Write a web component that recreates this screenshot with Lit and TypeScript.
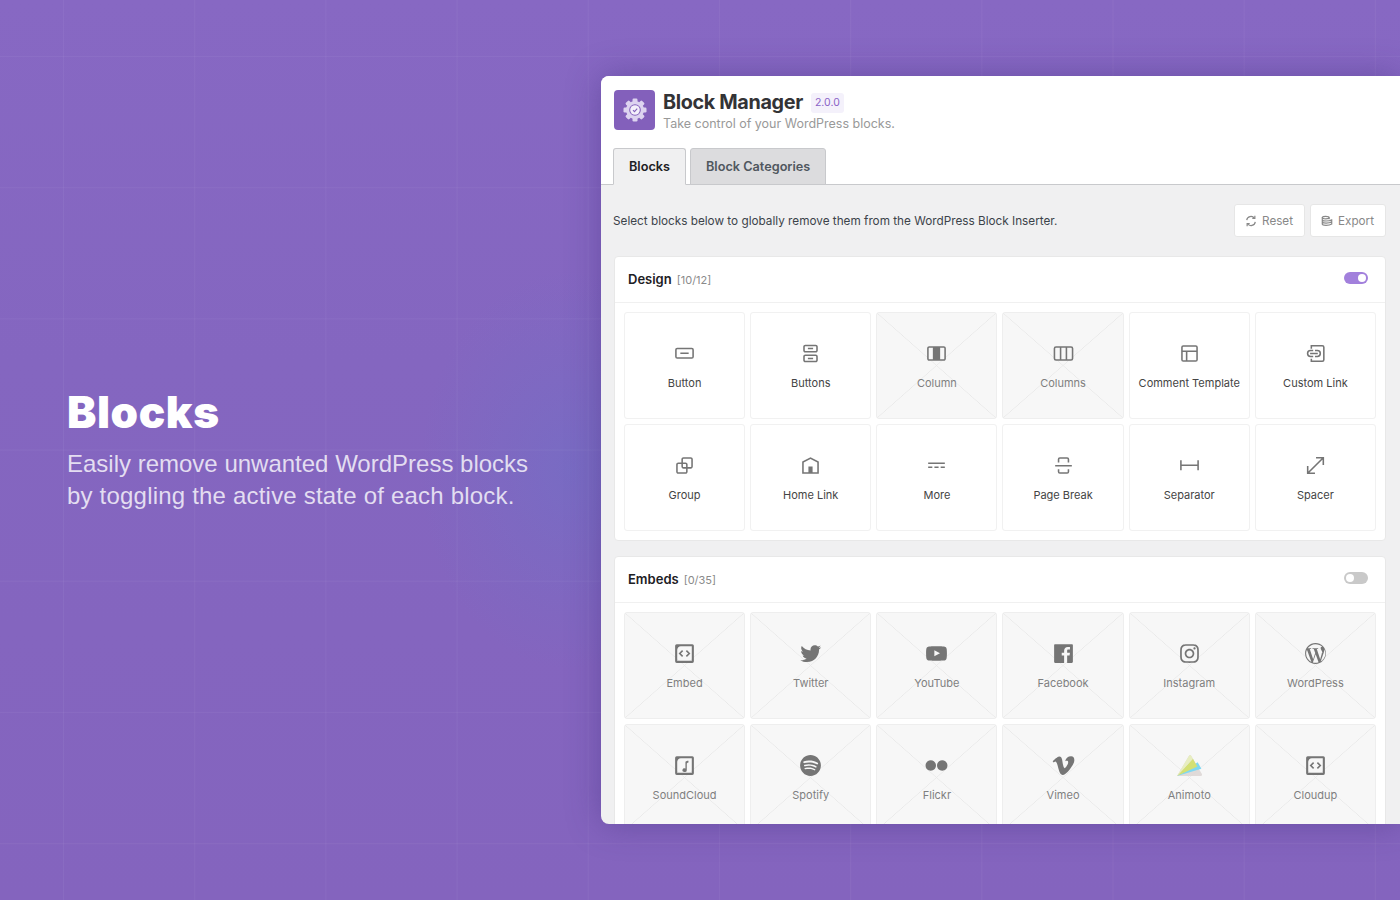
import { LitElement, html, css, svg } from "lit";
import { customElement } from "lit/decorators.js";

const p = (d: string) => svg`<path d=${d}></path>`;
const s = (d: string) => svg`<path class="st" d=${d}></path>`;
const frame = "M4.5 3h15A1.5 1.5 0 0 1 21 4.5v15a1.5 1.5 0 0 1-1.5 1.5h-15A1.5 1.5 0 0 1 3 19.5v-15A1.5 1.5 0 0 1 4.5 3zM8.5 5C6.5 5.2 5.2 6.5 5 8.5V19h14V5z";
const frameIcon = svg`<path fill-rule="evenodd" d=${frame}></path>`;
const codeMarks = s("M10.2 9.2 7.4 12l2.8 2.8M13.8 9.2l2.8 2.8-2.8 2.8");

const I: Record<string, unknown> = {
  button: p("M8 12.5h8V11H8v1.5Z M19 6.5H5a2 2 0 0 0-2 2V15a2 2 0 0 0 2 2h14a2 2 0 0 0 2-2V8.5a2 2 0 0 0-2-2ZM5 8h14a.5.5 0 0 1 .5.5V15a.5.5 0 0 1-.5.5H5a.5.5 0 0 1-.5-.5V8.5A.5.5 0 0 1 5 8Z"),
  buttons: p("M14.5 17.5H9.5V16H14.5V17.5Z M14.5 8H9.5V6.5H14.5V8Z M7 3.5H17C18.1046 3.5 19 4.39543 19 5.5V9C19 10.1046 18.1046 11 17 11H7C5.89543 11 5 10.1046 5 9V5.5C5 4.39543 5.89543 3.5 7 3.5ZM17 5H7C6.72386 5 6.5 5.22386 6.5 5.5V9C6.5 9.27614 6.72386 9.5 7 9.5H17C17.2761 9.5 17.5 9.27614 17.5 9V5.5C17.5 5.22386 17.2761 5 17 5Z M7 13H17C18.1046 13 19 13.8954 19 15V18.5C19 19.6046 18.1046 20.5 17 20.5H7C5.89543 20.5 5 19.6046 5 18.5V15C5 13.8954 5.89543 13 7 13ZM17 14.5H7C6.72386 14.5 6.5 14.7239 6.5 15V18.5C6.5 18.7761 6.72386 19 7 19H17C17.2761 19 17.5 18.7761 17.5 18.5V15C17.5 14.7239 17.2761 14.5 17 14.5Z"),
  column: p("M19 5H5c-1.1 0-2 .9-2 2v10c0 1.1.9 2 2 2h14c1.1 0 2-.9 2-2V7c0-1.1-.9-2-2-2zM5 17.5c-.3 0-.5-.2-.5-.5V7c0-.3.2-.5.5-.5h3.5v11H5zm14.5-.5c0 .3-.2.5-.5.5h-3.5v-11H19c.3 0 .5.2.5.5v10z"),
  columns: s("M4.8 5.8h14.4a1.5 1.5 0 0 1 1.5 1.5v9.4a1.5 1.5 0 0 1-1.5 1.5H4.800a1.5 1.5 0 0 1-1.500-1.500V7.300a1.500 1.500 0 0 1 1.500-1.500zM9.200 5.800v12.400M14.800 5.800v12.400"),
  layout: p("M18 5.500H6a.5.5 0 00-.5.5v3h13V6a.5.5 0 00-.5-.5zm.5 5H10v8h8a.5.5 0 00.5-.5v-7.500zm-10 0h-3V18a.5.5 0 00.5.500h2.500v-8zM6 4h12a2 2 0 012 2v12a2 2 0 01-2 2H6a2 2 0 01-2-2V6a2 2 0 012-2z"),
  custom: s("M8 7.500V4.500h10.500A1.500 1.500 0 0 1 20 6v12a1.500 1.500 0 0 1-1.500 1.500H8v-2.500M9.800 9.200H7.200a2.800 2.800 0 0 0 0 5.600h2.600M11.500 9.200h2.300a2.800 2.800 0 0 1 0 5.600h-2.300M6.800 12h7.400"),
  group: p("M18 4h-7c-1.100 0-2 .9-2 2v3H6c-1.100 0-2 .9-2 2v7c0 1.100.9 2 2 2h7c1.100 0 2-.9 2-2v-3h3c1.100 0 2-.9 2-2V6c0-1.100-.9-2-2-2zm-4.500 14c0 .3-.2.5-.5.5H6c-.3 0-.5-.2-.5-.5v-7c0-.3.2-.5.5-.5h3V13c0 1.100.9 2 2 2h2.500v3zm0-4.500H11c-.3 0-.5-.2-.5-.5v-2.500H13c.3 0 .5.2.5.5v2.500zm5-.5c0 .3-.2.5-.5.5h-3V11c0-1.100-.9-2-2-2h-2.500V6c0-.3.2-.5.5-.5h7c.3 0 .5.2.5.5v7z"),
  home: p("M12 4 4 8.200V20h16V8.200L12 4zm6.500 14.500H14V13h-4v5.500H5.500V9.100L12 5.700l6.500 3.400v9.400z"),
  more: p("M4 9v1.500h16V9H4zm12 5.500h4V13h-4v1.500zm-6 0h4V13h-4v1.500zm-6 0h4V13H4v1.500z"),
  pagebreak: p("M17.500 9V6a2 2 0 0 0-2-2h-7a2 2 0 0 0-2 2v3H8V6a.5.5 0 0 1 .5-.5h7a.5.5 0 0 1 .5.5v3h1.500Zm0 6.500V18a2 2 0 0 1-2 2h-7a2 2 0 0 1-2-2v-2.500H8V18a.5.5 0 0 0 .5.5h7a.5.5 0 0 0 .5-.5v-2.500h1.500ZM4 13h16v-1.500H4V13Z"),
  separator: p("M4.500 12.500v4H3V7h1.500v3.987h15V7H21v9.500h-1.500v-4h-15Z"),
  spacer: s("M4.500 19.500 19.500 4.500M12.500 4.500h7v7M11.500 19.500h-7v-7"),
  embed: svg`${frameIcon}${codeMarks}`,
  twitter: p("M22.230 5.924c-.736.326-1.527.547-2.357.646.847-.508 1.498-1.312 1.804-2.270-.793.470-1.670.812-2.606.996C18.325 4.498 17.258 4 16.078 4c-2.266 0-4.103 1.837-4.103 4.103 0 .322.036.635.106.935-3.410-.170-6.433-1.804-8.457-4.287-.353.607-.556 1.312-.556 2.064 0 1.424.724 2.680 1.825 3.415-.673-.022-1.305-.207-1.860-.514v.052c0 1.988 1.415 3.647 3.293 4.023-.344.095-.707.145-1.080.145-.265 0-.522-.026-.773-.074.522 1.630 2.038 2.817 3.833 2.850-1.404 1.100-3.174 1.757-5.096 1.757-.332 0-.660-.020-.980-.057 1.816 1.164 3.973 1.843 6.290 1.843 7.547 0 11.675-6.252 11.675-11.675 0-.178-.004-.355-.012-.530.802-.578 1.497-1.300 2.047-2.122z"),
  youtube: p("M21.800 8.001s-.195-1.378-.795-1.985c-.760-.797-1.613-.801-2.004-.847-2.799-.202-6.997-.202-6.997-.202h-.009s-4.198 0-6.997.202c-.390.047-1.242.051-2.003.847-.600.607-.795 1.985-.795 1.985S2 9.620 2 11.238v1.517c0 1.618.200 3.237.200 3.237s.195 1.378.795 1.985c.761.797 1.760.771 2.205.855 1.600.153 6.800.201 6.800.201s4.203-.006 7.001-.209c.391-.047 1.243-.051 2.004-.847.600-.607.795-1.985.795-1.985s.200-1.618.200-3.237v-1.517c0-1.618-.200-3.237-.200-3.237zM9.935 14.594l-.001-5.620 5.404 2.820-5.403 2.800z"),
  facebook: p("M20 3H4c-.600 0-1 .4-1 1v16c0 .5.4 1 1 1h8.600v-7h-2.300v-2.700h2.300v-2c0-2.300 1.400-3.600 3.500-3.600 1 0 1.800.1 2.100.1v2.400h-1.400c-1.100 0-1.300.5-1.300 1.300v1.700h2.700l-.4 2.800h-2.300v7H20c.5 0 1-.4 1-1V4c0-.6-.4-1-1-1z"),
  instagram: p("M12 4.622c2.403 0 2.688.01 3.637.052.877.04 1.354.187 1.670.31.42.163.72.358 1.036.673.315.315.51.615.673 1.035.123.317.27.794.31 1.670.043.95.052 1.235.052 3.638s-.01 2.688-.052 3.637c-.04.877-.187 1.354-.31 1.670-.163.42-.358.72-.673 1.036-.315.315-.615.51-1.035.673-.317.123-.794.27-1.670.31-.95.043-1.234.052-3.638.052s-2.688-.01-3.637-.052c-.877-.04-1.354-.187-1.670-.31-.42-.163-.72-.358-1.036-.673-.315-.315-.51-.615-.673-1.035-.123-.317-.27-.794-.31-1.670-.043-.95-.052-1.235-.052-3.638s.01-2.688.052-3.637c.04-.877.187-1.354.31-1.670.163-.42.358-.72.673-1.036.315-.315.615-.51 1.035-.673.317-.123.794-.27 1.670-.31.95-.043 1.235-.052 3.638-.052M12 3c-2.444 0-2.750.01-3.710.054s-1.613.196-2.185.418c-.592.23-1.094.538-1.594 1.040-.5.5-.807 1-1.037 1.593-.223.572-.375 1.226-.42 2.184C3.010 9.250 3 9.555 3 12s.01 2.750.054 3.710.196 1.613.418 2.186c.23.592.538 1.094 1.038 1.594s1.002.808 1.594 1.038c.572.222 1.227.375 2.185.418.96.044 1.266.054 3.710.054s2.750-.01 3.710-.054 1.613-.196 2.186-.418c.592-.23 1.094-.538 1.594-1.038s.808-1.002 1.038-1.594c.222-.572.375-1.227.418-2.185.044-.96.054-1.266.054-3.710s-.01-2.750-.054-3.710-.196-1.613-.418-2.186c-.23-.592-.538-1.094-1.038-1.594s-1.002-.808-1.594-1.038c-.572-.222-1.227-.375-2.185-.418C14.750 3.010 14.445 3 12 3zm0 4.378c-2.552 0-4.622 2.070-4.622 4.622s2.070 4.622 4.622 4.622 4.622-2.070 4.622-4.622S14.552 7.378 12 7.378zM12 15c-1.657 0-3-1.343-3-3s1.343-3 3-3 3 1.343 3 3-1.343 3-3 3zm4.804-8.884c-.596 0-1.080.484-1.080 1.080s.484 1.080 1.080 1.080c.596 0 1.080-.484 1.080-1.080s-.483-1.080-1.080-1.080z"),
  wordpress: p("M12.158 12.786L9.460 20.625c.806.237 1.657.366 2.540.366 1.047 0 2.051-.181 2.986-.51-.024-.038-.046-.079-.065-.124l-2.762-7.570zM3.009 12c0 3.559 2.068 6.634 5.067 8.092L3.788 8.341C3.289 9.459 3.009 10.696 3.009 12zm15.540-.468c0-1.112-.399-1.881-.741-2.480-.456-.741-.883-1.368-.883-2.109 0-.826.627-1.596 1.510-1.596.04 0 .078.005.116.007C16.943 4.060 14.570 3.009 12 3.009c-3.141 0-5.904 1.612-7.512 4.052.211.007.41.011.579.011.94 0 2.396-.114 2.396-.114.484-.028.541.684.057.741 0 0-.487.057-1.029.085l3.274 9.739 1.968-5.901-1.401-3.838c-.484-.028-.943-.085-.943-.085-.485-.029-.428-.769.057-.741 0 0 1.484.114 2.368.114.94 0 2.397-.114 2.397-.114.485-.028.542.684.057.741 0 0-.488.057-1.029.085l3.249 9.665.897-2.996c.456-1.169.684-2.137.684-2.907zm1.820-3.860c.039.286.06.593.06.924 0 .912-.171 1.938-.684 3.220l-2.746 7.940c2.673-1.558 4.470-4.454 4.470-7.771 0-1.564-.399-3.034-1.100-4.313zM12 22C6.486 22 2 17.514 2 12S6.486 2 12 2s10 4.486 10 10-4.486 10-10 10z"),
  soundcloud: svg`${frameIcon}<path d="M14.800 7.400c-.9.100-1.500.500-1.900 1.100v6.300a2.100 1.800 0 1 0 1.300 1.700V10c.4-.5 1-.8 1.600-.8V7.400z"></path>`,
  spotify: p("M12 2C6.477 2 2 6.477 2 12s4.477 10 10 10 10-4.477 10-10S17.523 2 12 2m4.586 14.424c-.18.295-.563.387-.857.207-2.350-1.434-5.305-1.760-8.786-.963-.335.077-.67-.133-.746-.47-.077-.334.132-.67.47-.745 3.808-.87 7.076-.496 9.712 1.115.293.18.386.563.206.857M17.810 13.700c-.226.367-.706.482-1.072.257-2.687-1.652-6.785-2.130-9.965-1.166-.413.127-.848-.106-.973-.517-.125-.413.108-.848.52-.973 3.632-1.102 8.147-.568 11.234 1.328.366.226.48.707.256 1.072m.105-2.835C14.692 8.950 9.375 8.775 6.297 9.710c-.493.15-1.016-.13-1.166-.624-.148-.495.13-1.017.625-1.167 3.532-1.073 9.404-.866 13.115 1.337.445.264.59.838.327 1.282-.264.443-.838.59-1.282.325"),
  flickr: p("m6.500 7c-2.750 0-5 2.250-5 5s2.250 5 5 5 5-2.250 5-5-2.250-5-5-5zm11 0c-2.750 0-5 2.250-5 5s2.250 5 5 5 5-2.250 5-5-2.250-5-5-5z"),
  vimeo: p("M22.396 7.164c-.093 2.026-1.507 4.800-4.245 8.320C15.323 19.160 12.930 21 10.970 21c-1.214 0-2.240-1.120-3.080-3.360-.56-2.052-1.118-4.105-1.680-6.158-.622-2.240-1.290-3.360-2.004-3.360-.156 0-.7.328-1.634.98l-.978-1.260c1.027-.903 2.040-1.806 3.037-2.710C6 3.950 7.030 3.328 7.716 3.265c1.620-.156 2.616.95 2.990 3.320.404 2.558.685 4.148.84 4.770.468 2.120.982 3.180 1.543 3.180.435 0 1.090-.687 1.963-2.064.872-1.376 1.340-2.422 1.402-3.142.125-1.187-.343-1.782-1.400-1.782-.5 0-1.013.115-1.542.34 1.023-3.350 2.977-4.976 5.862-4.883 2.140.063 3.148 1.450 3.024 4.160z"),
  animoto: svg`<g transform="translate(0 1)" opacity=".85">
    <path fill="#dcd6d4" d="M23.725 19.020 13.718 1.836c-.642-1.114-1.709-1.114-2.325 0L.1 21h22.566c1.279 0 1.802-.89 1.059-1.980z"></path>
    <path fill="#6bd3f2" d="M.02 21 19.837 7.922l3.583 6.208z"></path>
    <path fill="#cfdc5e" d="M.02 21 15.265 4.614l4.303 7.323z"></path>
    <path fill="#e6edb8" d="M13.715 1.836c-.642-1.114-1.709-1.114-2.325 0L.02 21 15.265 4.614z"></path>
  </g>`,
};

type Block = { n: string; i: string; off?: boolean };
const design: Block[] = [
  { n: "Button", i: "button" }, { n: "Buttons", i: "buttons" }, { n: "Column", i: "column", off: true },
  { n: "Columns", i: "columns", off: true }, { n: "Comment Template", i: "layout" }, { n: "Custom Link", i: "custom" },
  { n: "Group", i: "group" }, { n: "Home Link", i: "home" }, { n: "More", i: "more" },
  { n: "Page Break", i: "pagebreak" }, { n: "Separator", i: "separator" }, { n: "Spacer", i: "spacer" },
];
const embeds: Block[] = [
  ["Embed", "embed"], ["Twitter", "twitter"], ["YouTube", "youtube"], ["Facebook", "facebook"], ["Instagram", "instagram"], ["WordPress", "wordpress"],
  ["SoundCloud", "soundcloud"], ["Spotify", "spotify"], ["Flickr", "flickr"], ["Vimeo", "vimeo"], ["Animoto", "animoto"], ["Cloudup", "embed"],
].map(([n, i]) => ({ n, i, off: true }));

const gearTeeth = [0, 45, 90, 135, 180, 225, 270, 315];

@customElement("app-root")
export class AppRoot extends LitElement {
  static styles = css`
    :host { display: block; }
    * { box-sizing: border-box; }
    .page {
      height: 900px; width: 1400px; display: flex; align-items: center; overflow: hidden;
      background-color: #8466c0;
      background-image:
        linear-gradient(90deg, rgba(255,255,255,.045) 1px, transparent 1px),
        linear-gradient(0deg, rgba(255,255,255,.045) 1px, transparent 1px),
        radial-gradient(ellipse 150px 200px at 570px 470px, rgba(105,115,200,.42), transparent),
        linear-gradient(180deg, #8768c3, #8466c0 40%, #8464be);
      background-size: 131.2px 131.2px, 131.2px 131.2px, auto, auto;
      background-position: 63px 0, 0 57px, 0 0, 0 0;
    }
    .intro { width: 601px; flex: none; padding-left: 67px; font-family: "Liberation Sans", sans-serif; }
    h1 { margin: -2px 0 10px; color: #fff; font: 900 44px/52px Inter, sans-serif; letter-spacing: .6px; }
    .intro p { margin: 0; color: rgba(255,255,255,.78); font-size: 24px; line-height: 32px; }
    .intro .l2 { letter-spacing: .2px; }

    .win {
      flex: 1; height: 748px; overflow: hidden; background: #f0f0f1; border-radius: 8px 0 0 8px;
      box-shadow: 0 0 34px rgba(60,40,120,.4); font-family: Inter, sans-serif;
    }
    .top { background: #fff; height: 109px; display: flex; flex-direction: column; }
    .brand { display: flex; align-items: flex-start; gap: 8px; padding: 14px 13px 0; }
    .logo { width: 41px; height: 40px; border-radius: 4px; background: #8360bb; display: flex; align-items: center; justify-content: center; flex: none; }
    .logo svg { width: 26px; height: 26px; }
    .tl { display: flex; align-items: center; gap: 8px; height: 23px; }
    .tl b { font-size: 19.8px; font-weight: 700; color: #333336; letter-spacing: -.35px; }
    .ver { font-size: 10.5px; color: #8a63c7; background: #f4f1fb; border-radius: 3px; padding: 3px 4px; line-height: 14px; margin-top: 2px; }
    .sub { font-size: 12.5px; color: #999; line-height: 18px; margin-top: 2px; }
    .tabs { margin-top: auto; padding-left: 12px; display: flex; gap: 4px; border-bottom: 1px solid #c8c9cc; height: 37px; }
    .tab { height: 37px; padding: 0 15px 1px; border: 1px solid #c8c9cc; border-radius: 3px 3px 0 0; font-size: 12.7px; font-weight: 600; display: flex; align-items: center; color: #1d2024; }
    .tab.on { background: #f0f0f1; border-bottom-color: #f0f0f1; }
    .tab.off { background: #dcdcde; color: #50575e; }

    .body { padding: 0 14px 0 13px; }
    .desc { display: flex; align-items: center; justify-content: space-between; height: 71px; }
    .desc span.t { font-size: 11.75px; color: #3c434a; margin-left: -1px; }
    .acts { display: flex; gap: 5px; }
    .btn { height: 33px; background: #fff; border: 1px solid #e6e6e6; border-radius: 3px; display: flex; align-items: center; gap: 5px; padding: 0 11px 0 10px; font-size: 11.7px; color: #888; }
    .btn svg { width: 12px; height: 12px; fill: none; stroke: #888; stroke-width: 1.4; }

    .card { background: #fff; border: 1px solid #e8e8e8; border-radius: 4px; margin-bottom: 15px; }
    .card-h { height: 46px; display: flex; align-items: center; padding: 0 17px 1px 13px; border-bottom: 1px solid #f0f0f0; }
    .card-h b { font-size: 13px; font-weight: 600; color: #1d2024; }
    .card-h small { font-size: 11px; color: #8a8a8a; margin-left: 5px; margin-top: 1px; }
    .tg { margin-left: auto; width: 24px; height: 12px; border-radius: 6px; background: #c9c9c9; position: relative; top: -1px; }
    .tg::after { content: ""; position: absolute; top: 2px; left: 2px; width: 8px; height: 8px; border-radius: 50%; background: #fff; }
    .tg.on { background: #a280dc; }
    .tg.on::after { left: 14px; }
    .grid { display: grid; grid-template-columns: repeat(6, 1fr); gap: 5.5px 5px; padding: 9px 9px 9.5px; }
    .cell {
      height: 106.500px; border: 1px solid #f1f1f1; border-radius: 3px; display: flex; flex-direction: column;
      align-items: center; padding-top: 28px; color: #444; font-size: 11px; line-height: 14px;
    }
    .cell svg { width: 25px; height: 25px; fill: #757575; margin-bottom: 10px; flex: none; }
    .cell .st { fill: none; stroke: #757575; stroke-width: 1.500; }
    .cell.off {
      color: #7f7f7f; border-color: #eeeeee;
      background:
        linear-gradient(to top right, transparent calc(50% - .6px), #e9e9e9 50%, transparent calc(50% + .6px)),
        linear-gradient(to bottom right, transparent calc(50% - .6px), #e9e9e9 50%, transparent calc(50% + .6px)),
        #f7f7f7;
    }
  `;

  private cell(b: Block) {
    return html`<div class="cell ${b.off ? "off" : ""}">
      <svg viewBox="0 0 24 24">${I[b.i]}</svg>
      <span>${b.n}</span>
    </div>`;
  }

  private card(name: string, count: string, on: boolean, blocks: Block[]) {
    return html`<section class="card">
      <div class="card-h"><b>${name}</b><small>[${count}]</small><div class="tg ${on ? "on" : ""}"></div></div>
      <div class="grid">${blocks.map((b) => this.cell(b))}</div>
    </section>`;
  }

  render() {
    return html`<div class="page">
      <div class="intro">
        <h1>Blocks</h1>
        <p>Easily remove unwanted WordPress blocks<br /><span class="l2">by toggling the active state of each block.</span></p>
      </div>
      <div class="win">
        <div class="top">
          <div class="brand">
            <div class="logo">
              <svg viewBox="0 0 26 26">
                ${gearTeeth.map((a) => svg`<rect x="10.500" y="1.500" width="5" height="4.500" rx="1.200" fill="#ddd3f0" transform="rotate(${a} 13 13)"></rect>`)}
                <circle cx="13" cy="13" r="9" fill="#ddd3f0"></circle>
                <circle cx="13" cy="13" r="5.800" fill="#8360bb"></circle>
                <circle cx="13" cy="13" r="4.800" fill="#f4f0fb"></circle>
                <path d="M11 13.100l1.500 1.500 2.700-2.900" fill="none" stroke="#8360bb" stroke-width="1.100"></path>
              </svg>
            </div>
            <div>
              <div class="tl"><b>Block Manager</b><span class="ver">2.0.0</span></div>
              <div class="sub">Take control of your WordPress blocks.</div>
            </div>
          </div>
          <div class="tabs">
            <div class="tab on">Blocks</div>
            <div class="tab off">Block Categories</div>
          </div>
        </div>
        <div class="body">
          <div class="desc">
            <span class="t">Select blocks below to globally remove them from the WordPress Block Inserter.</span>
            <div class="acts">
              <div class="btn">
                <svg viewBox="0 0 14 14"><path d="M2 6a5 5 0 0 1 9-2.200M12 8a5 5 0 0 1-9 2.200"></path><path d="M11.500 1v3h-3M2.500 13v-3h3"></path></svg>
                Reset
              </div>
              <div class="btn">
                <svg viewBox="0 0 14 14"><ellipse cx="5.500" cy="3" rx="4" ry="1.500"></ellipse><path d="M1.500 5.500c0 2 8 2 11 0M1.500 8c0 2 8 2 11 0M1.500 10.500c0 2 8 2 11 0M1.500 3v8M12.500 5v6M9.500 3v2"></path></svg>
                Export
              </div>
            </div>
          </div>
          ${this.card("Design", "10/12", true, design)}
          ${this.card("Embeds", "0/35", false, embeds)}
        </div>
      </div>
    </div>`;
  }
}
